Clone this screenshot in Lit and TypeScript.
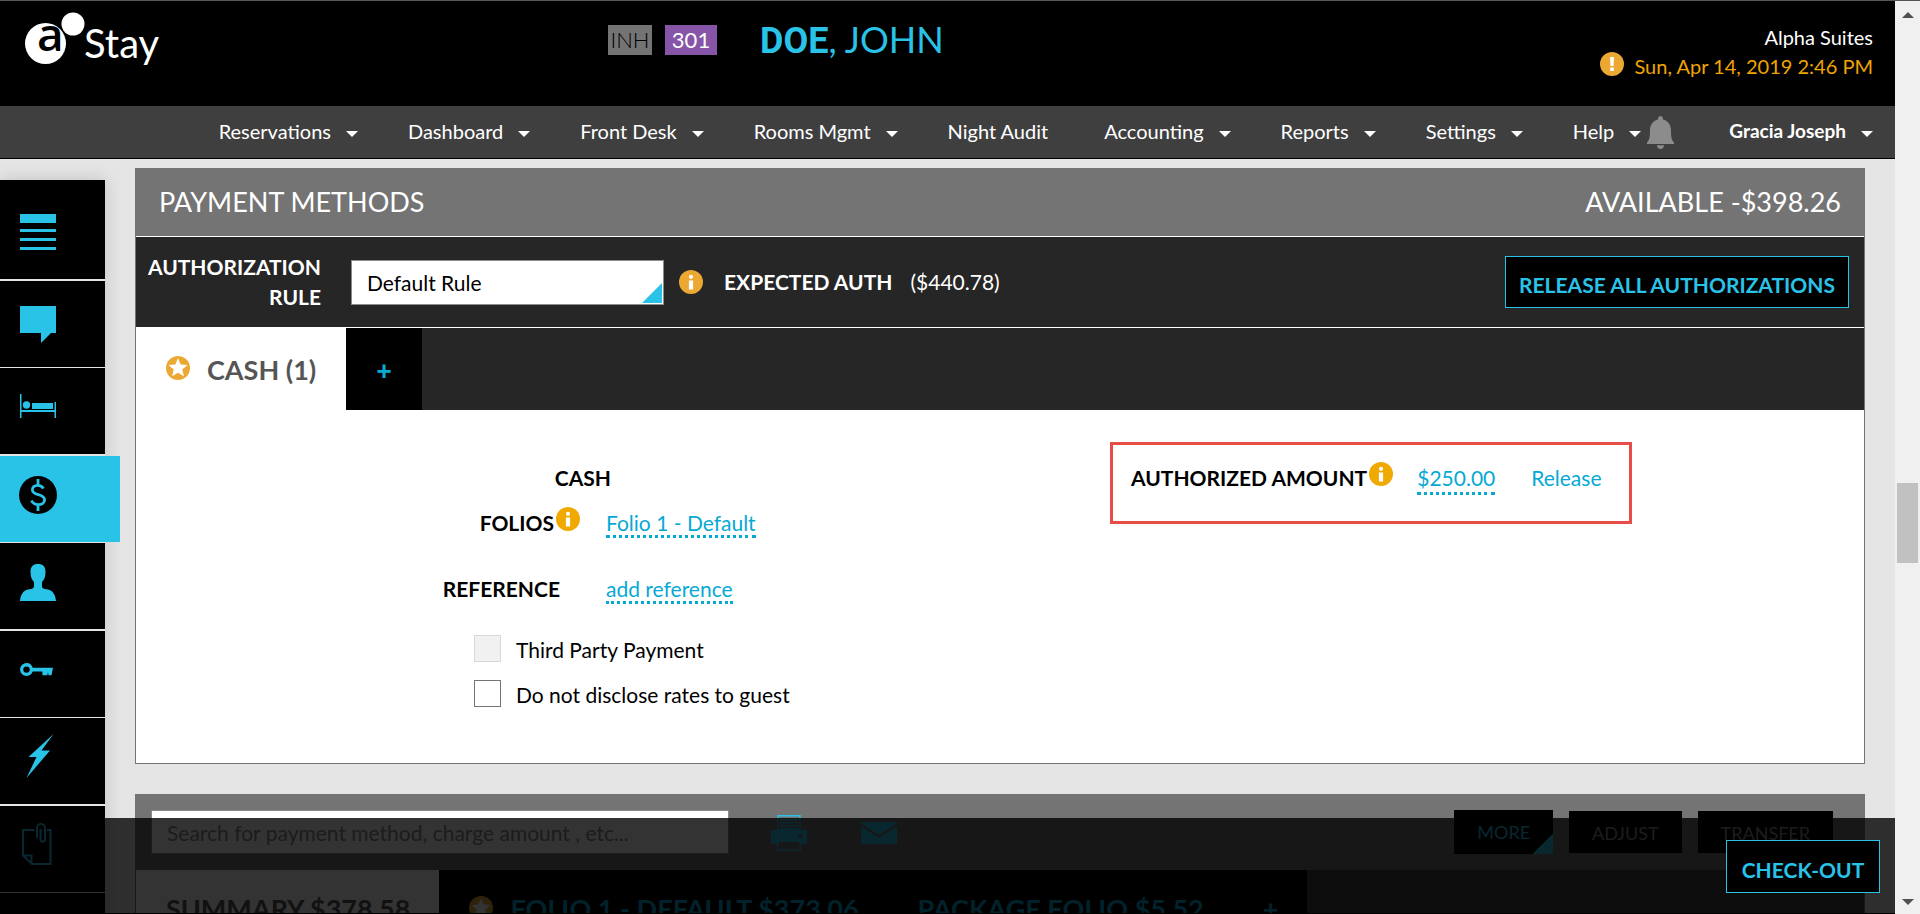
import { LitElement, html, css, svg } from "lit";
import { customElement } from "lit/decorators.js";
import { classMap } from "lit/directives/class-map.js";

const infoIcon = html`<svg class="badge" viewBox="0 0 24 24" aria-hidden="true">
  <circle cx="12" cy="12" r="12" fill="currentColor" />
  <circle cx="12" cy="6.8" r="2.1" fill="#fff" />
  <path d="M9.900 10.500h4.200V19.500H9.900z" fill="#fff" />
</svg>`;

const alertIcon = html`<svg class="badge" viewBox="0 0 24 24" aria-hidden="true">
  <circle cx="12" cy="12" r="12" fill="currentColor" />
  <path d="M10 5h4l-.5 9h-3zM10.200 15.600h3.600v3.400h-3.600z" fill="#fff" />
</svg>`;

const starIcon = html`<svg class="badge" viewBox="0 0 24 24" aria-hidden="true">
  <circle cx="12" cy="12" r="12" fill="currentColor" />
  <path d="M12 2.200l2.700 6.300 6.800.6-5.200 4.500 1.600 6.700-5.900-3.600-5.900 3.600 1.600-6.700-5.200-4.500 6.800-.6z" fill="#fff" />
</svg>`;

const glyphs: Record<string, unknown> = {
  list: svg`<path d="M0 0h36v9H0zM0 15h36v3H0zM0 24h36v3H0zM0 33h36v3H0z"/>`,
  note: svg`<path d="M0 10h36v27h-5L21 47V37H0z"/>`,
  bed: svg`<path d="M0 0h1.500v16h33V8H36v16h-1.500v-6h-33v6H0z"/><circle cx="6.500" cy="11" r="3.700"/><path d="M12 9h21v6H12z"/>`,
  money: svg`<circle cx="18" cy="18" r="19" fill="#000"/><path d="M23.500 11.500C22 9 20 8.300 18 8.300c-3.600 0-5.600 2-5.600 4.600 0 6 12.200 3.600 12.200 9.800 0 3-2.700 5-6.300 5-3.300 0-5.500-1.400-6.900-4M18 2v7M18 27v7" fill="none" stroke="#29c3e8" stroke-width="2.800"/>`,
  person: svg`<path d="M18 0c5 0 7.500 2.500 7.500 8 0 5-1.500 8-3.500 10v4c0 3 3 3 6 3.500 4.500 1 7.500 5 8 11.500H0C.5 30.500 3.500 26.500 8 25.500c3-.5 6-.5 6-3.500v-4c-2-2-3.500-5-3.500-10 0-5.500 2.500-8 7.500-8z"/>`,
  key: svg`<path fill-rule="evenodd" d="M6.500 0a6.500 6.500 0 0 1 6.200 4.700H33l-1.500 7.500h-3l-.5-3-.7 3h-4.800l-.2-3.700h-9.600A6.500 6.500 0 1 1 6.500 0zm0 3.400a3.200 3.200 0 1 0 0 6.400 3.200 3.200 0 0 0 0-6.400z"/>`,
  bolt: svg`<path d="M33.500 0 21.500 16.500H30L6.500 44l10-21H8.500z"/>`,
  attach: svg`<path d="M14.500 8H3v25.500l9 8.500h18.500V8H27M3 33.500h8.500V42M17 16V6c0-5.500 8-5.500 8 0v11c0 3.500-4.500 3.500-4.500 0V7" fill="none" stroke="currentColor" stroke-width="2"/>`,
};

const shared = css`
  :host {
    box-sizing: border-box;
  }
  *,
  *::before,
  *::after {
    box-sizing: border-box;
  }
  button,
  select,
  input {
    font: inherit;
    margin: 0;
    border-radius: 0;
  }
  a {
    text-decoration: none;
    color: inherit;
  }
  .badge {
    width: 24px;
    height: 24px;
    flex: none;
    display: block;
  }
`;

interface MenuItem {
  label: string;
  menu: boolean;
}

@customElement("top-bar")
class TopBar extends LitElement {
  static styles = [
    shared,
    css`
      :host {
        display: block;
      }
      .brand-row {
        display: grid;
        grid-template-columns: 608px 1fr auto;
        height: 106px;
        background: #000;
        border-top: 1px solid #555;
        padding-right: 22px;
      }
      .logo {
        margin: 9px 0 0 20px;
        width: 150px;
        height: 62px;
      }
      .guest {
        display: flex;
        align-items: flex-start;
        padding-top: 16px;
      }
      .tag {
        height: 30px;
        margin-top: 8px;
        line-height: 30px;
        font-size: 22px;
        text-align: center;
      }
      .status {
        width: 44px;
        background: #747474;
        color: #000;
        font-weight: 300;
      }
      .room {
        width: 52px;
        margin-left: 13px;
        background: #8755a7;
        color: #fff;
      }
      .name {
        margin: 0 0 0 43px;
        font-size: 36px;
        line-height: 44px;
        font-weight: 400;
        color: #29c3e8;
      }
      .surname {
        font-family: Roboto, sans-serif;
        font-weight: 700;
      }
      .place {
        padding-top: 22px;
        display: flex;
        flex-direction: column;
        align-items: flex-end;
        color: #fff;
        font-size: 20px;
        line-height: 29px;
      }
      .clock {
        display: flex;
        gap: 10px;
        color: #f0a500;
      }
      .clock .badge {
        color: #eba934;
      }
      nav {
        height: 53px;
        background: #3f3f3f;
        border-bottom: 1px solid #000;
        display: flex;
        align-items: center;
        justify-content: flex-end;
        padding: 0 22px 2px 0;
        color: #fff;
        font-size: 20px;
        line-height: 30px;
      }
      .item {
        display: flex;
        align-items: center;
        margin-left: 50px;
        white-space: nowrap;
      }
      .plain {
        margin-right: 6px;
      }
      .caret {
        margin: 6px 0 0 15px;
        border: 6px solid transparent;
        border-top-color: #fff;
        border-bottom: 0;
      }
      .bell {
        width: 27px;
        height: 33px;
        margin: 2px 0 0 6px;
      }
      .user {
        margin-left: 55px;
        font-size: 19px;
        font-weight: 700;
      }
    `,
  ];

  private items: MenuItem[] = [
    { label: "Reservations", menu: true },
    { label: "Dashboard", menu: true },
    { label: "Front Desk", menu: true },
    { label: "Rooms Mgmt", menu: true },
    { label: "Night Audit", menu: false },
    { label: "Accounting", menu: true },
    { label: "Reports", menu: true },
    { label: "Settings", menu: true },
    { label: "Help", menu: true },
  ];

  render() {
    return html`
      <header class="brand-row">
        <svg class="logo" viewBox="20 10 150 62" role="img" aria-label="aStay">
          <circle cx="45.500" cy="43.500" r="20.500" fill="#fff" />
          <text x="37" y="51" font-family="Open Sans, sans-serif" font-weight="600" font-size="46" fill="#000">a</text>
          <circle cx="73" cy="24" r="11.500" fill="#fff" />
          <text x="84" y="58" font-family="Lato, sans-serif" font-size="40" fill="#fff">Stay</text>
        </svg>
        <div class="guest">
          <span class="tag status">INH</span>
          <span class="tag room">301</span>
          <h1 class="name"><span class="surname">DOE</span>, JOHN</h1>
        </div>
        <div class="place">
          <span>Alpha Suites</span>
          <span class="clock">${alertIcon}<span>Sun, Apr 14, 2019 2:46 PM</span></span>
        </div>
      </header>
      <nav>
        ${this.items.map(
          (i) => html`<a class=${classMap({ item: true, plain: !i.menu })} href="#">${i.label}${i.menu ? html`<span class="caret"></span>` : ""}</a>`
        )}
        <svg class="bell" viewBox="0 0 27 33" fill="#8c8c8c" aria-hidden="true">
          <path d="M13.500 0c1.500 0 2.500 1.200 2.500 3.500 5 1.200 8 5.500 8 10.500 0 7 .5 10 3 12.500V28H0v-1.500C2.500 24 3 21 3 14 3 9 6 4.700 11 3.500 11 1.200 12 0 13.500 0zM10 29.300h7c0 2.300-1.400 3.700-3.500 3.700S10 31.600 10 29.300z" />
        </svg>
        <a class="item user" href="#">Gracia Joseph<span class="caret"></span></a>
      </nav>
    `;
  }
}

interface SideItem {
  icon: string;
  label: string;
  w: number;
  h: number;
  active?: boolean;
}

@customElement("side-bar")
class SideBar extends LitElement {
  static styles = [
    shared,
    css`
      :host {
        display: block;
        width: 105px;
        box-shadow: 0 0 16px rgba(0, 0, 0, 0.16);
      }
      .entry {
        display: flex;
        align-items: center;
        width: 105px;
        height: 86px;
        padding: 0 0 10px 20px;
        margin-bottom: 2px;
        background: #000;
        color: #29c3e8;
      }
      .entry:nth-child(even) {
        margin-bottom: 1px;
      }
      .entry:first-child {
        height: 99px;
        padding-bottom: 0;
        padding-top: 4px;
      }
      .active {
        width: 120px;
        background: #29c3e8;
      }
      svg {
        overflow: visible;
      }
    `,
  ];

  private items: SideItem[] = [
    { icon: "list", label: "Summary", w: 36, h: 36 },
    { icon: "note", label: "Notes", w: 36, h: 47 },
    { icon: "bed", label: "Room", w: 36, h: 24 },
    { icon: "money", label: "Payments", w: 36, h: 34, active: true },
    { icon: "person", label: "Guest", w: 36, h: 35 },
    { icon: "key", label: "Keys", w: 33, h: 13 },
    { icon: "bolt", label: "Activity", w: 36, h: 44 },
    { icon: "attach", label: "Attachments", w: 36, h: 44 },
    { icon: "", label: "More", w: 36, h: 36 },
  ];

  render() {
    return html`${this.items.map(
      (i) => html`<a class=${classMap({ entry: true, active: !!i.active })} href="#" aria-label=${i.label}>
        <svg width=${i.w} height=${i.h} viewBox="0 0 ${i.w} ${i.h}" fill="currentColor">${glyphs[i.icon] ?? ""}</svg>
      </a>`
    )}`;
  }
}

@customElement("payment-panel")
class PaymentPanel extends LitElement {
  static styles = [
    shared,
    css`
      :host {
        display: block;
        border: 1px solid #747474;
        background: #fff;
      }
      .title {
        display: flex;
        justify-content: space-between;
        align-items: center;
        height: 67px;
        padding: 0 23px 2px;
        background: #747474;
        color: #fff;
        font-size: 27px;
        line-height: 34px;
      }
      h2 {
        margin: 0;
        font: inherit;
      }
      .rule {
        display: flex;
        align-items: center;
        height: 92px;
        padding: 0 15px 0 11px;
        border: 1px solid #fff;
        border-width: 1px 0;
        background: #262626;
        color: #fff;
        font-size: 21px;
        line-height: 30px;
      }
      .rule-label {
        width: 174px;
        text-align: right;
        font-weight: 700;
      }
      .picker {
        position: relative;
        margin-left: 30px;
        width: 313px;
      }
      .picker select {
        appearance: none;
        display: block;
        width: 100%;
        height: 45px;
        padding: 2px 15px 0;
        border: 1px solid #8c8c8c;
        background: #fff;
        color: #000;
      }
      .picker::after {
        content: "";
        position: absolute;
        right: 2px;
        bottom: 2px;
        border: 10px solid #29c3e8;
        border-top-color: transparent;
        border-left-color: transparent;
        pointer-events: none;
      }
      .badge {
        color: #eba934;
      }
      .rule .badge {
        margin: 0 21px 0 15px;
      }
      .expected {
        margin: 0 18px 0 0;
        font-weight: 700;
      }
      .release {
        margin-left: auto;
        width: 344px;
        height: 52px;
        padding: 6px 0 0;
        border: 1px solid #29c3e8;
        background: #000;
        color: #29c3e8;
        font-weight: 700;
        white-space: nowrap;
      }
      .tabs {
        display: flex;
        height: 82px;
        background: #262626;
      }
      .tabs button {
        border: 0;
        display: flex;
        align-items: center;
      }
      .tab {
        width: 210px;
        padding: 0 0 0 30px;
        gap: 17px;
        background: #fff;
        color: #555;
        font-size: 27px;
        font-weight: 700;
      }
      .tab .badge {
        margin-bottom: 2px;
      }
      .add {
        width: 76px;
        padding: 0;
        justify-content: center;
        background: #000;
        color: #06a9d4;
        font-size: 27px;
        font-weight: 900;
      }
      .body {
        display: grid;
        grid-template-columns: 974px 1fr;
        align-items: start;
        font-size: 21px;
        line-height: 30px;
        color: #000;
        padding-bottom: 46px;
      }
      .fields {
        padding-top: 45px;
      }
      .kind {
        width: 475px;
        height: 45px;
        padding-top: 8px;
        text-align: right;
        font-weight: 700;
      }
      .field {
        display: flex;
        height: 45px;
        padding-top: 8px;
      }
      .reference {
        margin: 21px 0 16px;
      }
      .key {
        display: flex;
        justify-content: flex-end;
        width: 444px;
        margin-right: 26px;
        font-weight: 700;
      }
      .reference .key {
        padding-right: 20px;
      }
      .key .badge,
      .auth .badge {
        margin: -1px 0 0 2px;
        color: #f0a900;
      }
      .link {
        color: #06a9d4;
      }
      .dotted {
        border-bottom: 3px dotted #06a9d4;
      }
      .check {
        display: flex;
        align-items: center;
        height: 45px;
        padding-left: 338px;
      }
      .check input {
        appearance: none;
        width: 27px;
        height: 27px;
        margin: 0 15px 2px 0;
        border: 1px solid #747474;
        background: #fff;
      }
      .check input:disabled {
        border-color: #d8d8d8;
        background: #f1f1f1;
      }
      .auth {
        display: flex;
        margin-top: 32px;
        width: 522px;
        height: 82px;
        padding: 18px 0 0 18px;
        border: 3px solid #e84c47;
        white-space: nowrap;
      }
      .auth strong {
        font-weight: 700;
      }
      .amount {
        margin: 0 36px 0 24px;
      }
      .amount .dotted {
        padding-bottom: 2px;
      }
    `,
  ];

  render() {
    return html`
      <div class="title">
        <h2>PAYMENT METHODS</h2>
        <span>AVAILABLE -$398.26</span>
      </div>
      <div class="rule">
        <label class="rule-label" for="rule">AUTHORIZATION RULE</label>
        <span class="picker">
          <select id="rule">
            <option>Default Rule</option>
          </select>
        </span>
        ${infoIcon}
        <span class="expected">EXPECTED AUTH</span>
        <span>($440.78)</span>
        <button class="release">RELEASE ALL AUTHORIZATIONS</button>
      </div>
      <div class="tabs">
        <button class="tab">${starIcon}<span>CASH (1)</span></button>
        <button class="add" aria-label="Add method">+</button>
      </div>
      <div class="body">
        <div class="fields">
          <div class="kind">CASH</div>
          <div class="field">
            <span class="key">FOLIOS${infoIcon}</span>
            <span><a class="link dotted" href="#">Folio 1 - Default</a></span>
          </div>
          <div class="field reference">
            <span class="key">REFERENCE</span>
            <span><a class="link dotted" href="#">add reference</a></span>
          </div>
          <label class="check"><input type="checkbox" disabled />Third Party Payment</label>
          <label class="check"><input type="checkbox" />Do not disclose rates to guest</label>
        </div>
        <div class="auth">
          <strong>AUTHORIZED AMOUNT</strong>${infoIcon}
          <span class="amount"><a class="link dotted" href="#">$250.00</a></span>
          <a class="link" href="#">Release</a>
        </div>
      </div>
    `;
  }
}

@customElement("folio-panel")
class FolioPanel extends LitElement {
  static styles = [
    shared,
    css`
      :host {
        display: block;
        border: 1px solid #747474;
      }
      .tools {
        display: flex;
        align-items: flex-start;
        height: 75px;
        padding: 15px 31px 0 15px;
        background: #747474;
      }
      .search {
        width: 578px;
        height: 44px;
        padding: 0 15px;
        border: 1px solid #8c8c8c;
        background: #fff;
        font-size: 21px;
      }
      .search::placeholder {
        color: #8c8c8c;
        opacity: 1;
      }
      .icon {
        padding: 0;
        border: 0;
        background: none;
        color: #29c3e8;
        display: block;
      }
      .icon svg {
        display: block;
      }
      .print {
        margin: 5px 54px 0 42px;
      }
      .mail {
        margin: 12px auto 0 0;
      }
      .action {
        height: 42px;
        margin: 1px 0 0 16px;
        padding: 2px 23px 0;
        border: 0;
        background: #000;
        color: #8c8c8c;
        font-size: 18px;
      }
      .more {
        height: 44px;
        margin-top: 0;
        padding-top: 0;
        color: #29c3e8;
        background: linear-gradient(135deg, transparent 50%, #29c3e8 50%) right bottom / 20px 20px no-repeat #000;
      }
      .tabs {
        display: flex;
        height: 77px;
        background: #404040;
        font-size: 27px;
        font-weight: 700;
        color: #06a9d4;
        white-space: nowrap;
      }
      .tabs button {
        display: flex;
        align-items: center;
        gap: 17px;
        padding: 0 29px 0 30px;
        border: 0;
        background: #000;
        color: inherit;
      }
      .tabs .current {
        background: #fff;
        color: #555;
      }
      .badge {
        color: #eba934;
        margin-bottom: 1px;
      }
    `,
  ];

  render() {
    return html`
      <div class="tools">
        <input class="search" aria-label="Search" placeholder="Search for payment method, charge amount , etc..." />
        <button class="icon print" aria-label="Print">
          <svg width="36" height="36" viewBox="0 0 36 36" fill="currentColor">
            <path d="M7 .7h22V15H7z" fill="none" stroke="currentColor" stroke-width="1.400" />
            <path d="M9 4h18v1.500H9zM9 7h18v1.500H9zM9 10h18v1.500H9zM9 13h18v1.500H9z" />
            <path fill-rule="evenodd" d="M0 15h36v13.500h-6V35.700H6V28.500H0zM7.500 27v7.300h21V27zM29.700 19a2 2 0 1 0 0 4.200 2 2 0 0 0 0-4.200z" />
          </svg>
        </button>
        <button class="icon mail" aria-label="E-mail">
          <svg width="36" height="22" viewBox="0 0 36 22" fill="currentColor">
            <path d="M0 0h36v1.500L18 13 0 1.500zM0 4.200 18 15.700 36 4.200V22H0z" />
          </svg>
        </button>
        <button class="action more">MORE</button>
        <button class="action">ADJUST</button>
        <button class="action">TRANSFER</button>
      </div>
      <div class="tabs">
        <button class="current">SUMMARY $378.58</button>
        <button>${starIcon}<span>FOLIO 1 - DEFAULT $373.06</span></button>
        <button>PACKAGE FOLIO $5.52</button>
        <button aria-label="Add folio">+</button>
      </div>
    `;
  }
}

@customElement("app-root")
class AppRoot extends LitElement {
  static styles = [
    shared,
    css`
      :host {
        display: grid;
        grid-template-columns: minmax(0, 1fr) 25px;
        height: 100vh;
        overflow: hidden;
        font-family: Lato, sans-serif;
        background: #e5e5e5;
      }
      .page {
        position: relative;
        display: flex;
        flex-direction: column;
        height: 100vh;
        overflow: hidden;
      }
      .content {
        flex: 1;
        min-height: 0;
        display: flex;
        align-items: flex-start;
        gap: 30px;
        padding-right: 30px;
      }
      side-bar {
        flex: none;
        margin-top: 21px;
      }
      main {
        flex: 1;
        min-width: 0;
        display: flex;
        flex-direction: column;
        gap: 30px;
        margin-top: 9px;
      }
      .footer {
        position: absolute;
        left: 0;
        right: 0;
        bottom: 0;
        height: 96px;
        display: flex;
        justify-content: flex-end;
        align-items: flex-start;
        padding: 22px 15px 0 0;
        background: rgba(0, 0, 0, 0.8);
        border-bottom: 1px solid #000;
      }
      .checkout {
        width: 154px;
        height: 53px;
        padding: 5px 0 0;
        border: 1px solid #29c3e8;
        background: #000;
        color: #29c3e8;
        font-size: 21px;
        font-weight: 700;
        white-space: nowrap;
      }
      .scroll {
        display: flex;
        flex-direction: column;
        align-items: center;
        justify-content: space-between;
        padding: 11px 0 9px;
        background: #f0f0f0;
        border-top: 1px solid #555;
      }
      .arrow {
        border: 6px solid transparent;
      }
      .up {
        border-top: 0;
        border-bottom-color: #505050;
      }
      .down {
        border-bottom: 0;
        border-top-color: #505050;
      }
      .thumb {
        width: 21px;
        height: 80px;
        margin-top: 128px;
        background: #c1c1c1;
      }
    `,
  ];

  render() {
    return html`
      <div class="page">
        <top-bar></top-bar>
        <div class="content">
          <side-bar></side-bar>
          <main>
            <payment-panel></payment-panel>
            <folio-panel></folio-panel>
          </main>
        </div>
        <footer class="footer">
          <button class="checkout">CHECK-OUT</button>
        </footer>
      </div>
      <div class="scroll">
        <span class="arrow up"></span>
        <span class="thumb"></span>
        <span class="arrow down"></span>
      </div>
    `;
  }
}
